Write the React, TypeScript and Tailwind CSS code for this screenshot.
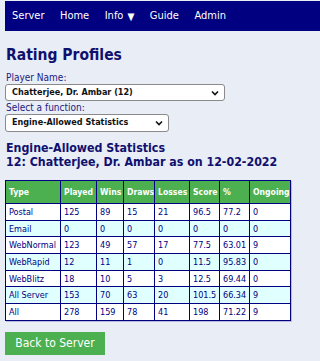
const font = "font-['DejaVu_Sans_Condensed','DejaVu_Sans',sans-serif]"

const rows = [
  ["Postal", "125", "89", "15", "21", "96.5", "77.2", "0"],
  ["Email", "0", "0", "0", "0", "0", "0", "0"],
  ["WebNormal", "123", "49", "57", "17", "77.5", "63.01", "9"],
  ["WebRapid", "12", "11", "1", "0", "11.5", "95.83", "0"],
  ["WebBlitz", "18", "10", "5", "3", "12.5", "69.44", "0"],
  ["All Server", "153", "70", "63", "20", "101.5", "66.34", "9"],
  ["All", "278", "159", "78", "41", "198", "71.22", "9"],
]

const heads = ["Type", "Played", "Wins", "Draws", "Losses", "Score", "%", "Ongoing"]
const widths = [55, 36, 27, 31, 35, 30, 30, 41]

function Chevron() {
  return (
    <svg width="8" height="6" viewBox="0 0 8 6" className="shrink-0">
      <path d="M1 1.5 L4 4.5 L7 1.5" fill="none" stroke="#111" strokeWidth="1.6" />
    </svg>
  )
}

function FakeSelect({ value, width }: { value: string; width: string }) {
  return (
    <div className={`${width} flex items-center justify-between bg-white border border-[#8a8a8a] rounded-[3px] pl-[6px] pr-[5px] text-[9px] font-bold text-[#111]`}>
      <span>{value}</span>
      <Chevron />
    </div>
  )
}

export default function App() {
  return (
    <div className={`${font} min-h-[361px] w-[320px] bg-[#e8edf6] pl-[5px] pt-[1px] overflow-hidden`}>
      <nav className="h-[30px] bg-[#000080] flex items-center text-white text-[11px] pl-[7px] gap-[15.5px]">
        <span>Server</span>
        <span>Home</span>
        <span className="flex items-center gap-[4px]">
          Info <span className="text-[10px]">▼</span>
        </span>
        <span>Guide</span>
        <span>Admin</span>
      </nav>

      <h1 className="mt-[15px] ml-[1px] text-[15.5px] leading-[18px] font-bold text-[#10106e]">Rating Profiles</h1>

      <div className="mt-[8px] ml-[1px] text-[10px] leading-[12px] text-[#1a1a80]">Player Name:</div>
      <FakeSelect value="Chatterjee, Dr. Ambar (12)" width="w-[220px] h-[17px]" />
      <div className="mt-[1px] ml-[1px] text-[10px] leading-[12px] text-[#1a1a80]">Select a function:</div>
      <FakeSelect value="Engine-Allowed Statistics" width="w-[164px] h-[18px]" />

      <div className="mt-[9px] ml-[1px] text-[12.3px] leading-[14px] font-bold text-[#10106e]">
        <div>Engine-Allowed Statistics</div>
        <div>12: Chatterjee, Dr. Ambar as on 12-02-2022</div>
      </div>

      <table className="mt-[11px] w-[286px] table-fixed border-collapse border border-[#000080] text-[9px] shadow-[1px_1px_0_#b9b9dd]">
        <colgroup>
          {widths.map((w, i) => (
            <col key={i} style={{ width: w }} />
          ))}
        </colgroup>
        <thead>
          <tr className="h-[23px] bg-[#4caf50]">
            {heads.map((h) => (
              <th key={h} className="border border-[#000080] text-left font-bold text-white pl-[3px] pr-0 text-[8.6px] whitespace-nowrap overflow-hidden">
                {h}
              </th>
            ))}
          </tr>
        </thead>
        <tbody>
          {rows.map((r, i) => (
            <tr key={r[0]} className={`h-[16.7px] ${i % 2 === 1 ? "bg-[#e0ffff]" : "bg-white"}`}>
              {r.map((c, j) => (
                <td key={j} className="border border-[#000080] text-left text-[#000080] pl-[3px] pr-0 py-0 leading-[12px] whitespace-nowrap overflow-hidden">
                  {c}
                </td>
              ))}
            </tr>
          ))}
        </tbody>
      </table>

      <button className="mt-[11px] w-[100px] h-[23px] bg-[#4caf50] text-white text-[12px] flex items-center justify-center">
        Back to Server
      </button>
    </div>
  )
}
